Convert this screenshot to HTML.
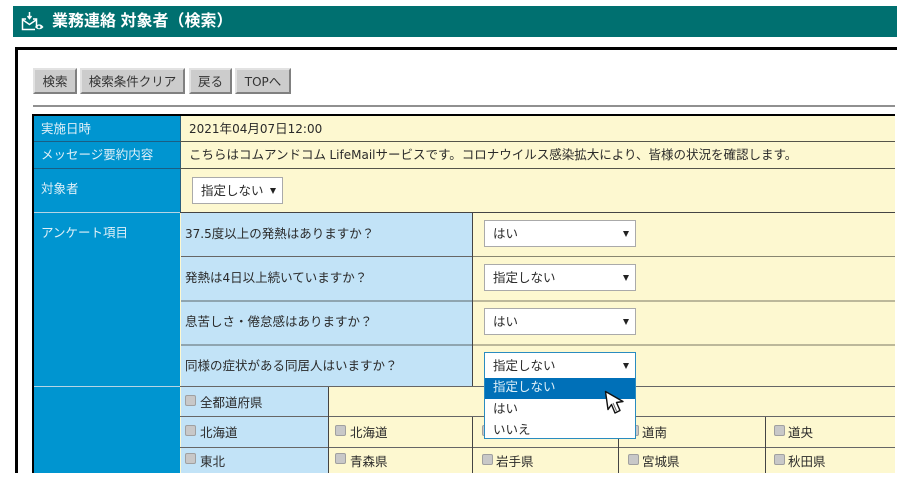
<!DOCTYPE html>
<html lang="ja"><head><meta charset="utf-8">
<style>
html,body{margin:0;padding:0;background:#fff}
#p{position:relative;width:910px;height:478px;overflow:hidden;background:#fff;font-family:"Liberation Sans","Noto Sans CJK JP",sans-serif;font-size:12.5px;color:#2a2a2a}
#p div{position:absolute}
.l{font-family:"DejaVu Sans",sans-serif;font-size:12px}
.t{white-space:nowrap;line-height:16px}
.w{color:#dff0f8}
.btn{top:68px;height:26px;box-sizing:border-box;background:#ccc;border:2px solid;border-color:#e2e2e2 #808080 #808080 #e2e2e2;text-align:center;line-height:24px;white-space:nowrap;color:#333}
.sel{background:#fff;border:1px solid #aaa;box-sizing:border-box;height:27px;line-height:27px;padding-left:8px;white-space:nowrap}
.sel:after{content:"";position:absolute;right:6px;top:10px;border-left:3px solid transparent;border-right:3px solid transparent;border-top:6px solid #222}
.cb{width:11px;height:11px;background:#c8c8c8;border:1px solid #a0a0a0;border-radius:2px;box-sizing:border-box}
</style></head><body><div id="p">
<div style="left:13px;top:6px;width:884px;height:31px;background:#007070"></div>
<svg style="position:absolute;left:20px;top:11px" width="26" height="21" viewBox="0 0 26 21" fill="none" stroke="#fff"><path d="M9.500 1v6M7.500 5l2 2.500 2-2.500" stroke-width="1.500"/><path d="M6 8H2.500v10.500H15M13 8h3.500v7" stroke-width="1.500"/><path d="M3 9l6.500 4.500L16 9" stroke-width="1.500"/><path d="M15 16c2.500-3.500 6-3.500 8.500 0-2.500 3-6 3-8.500 0z" fill="#fff" stroke="none"/><circle cx="19" cy="16" r="1.400" fill="#007070" stroke="none"/></svg>
<div class="t" style="left:52px;top:13px;font-size:16px;font-weight:bold;color:#fff;line-height:18px">業務連絡 対象者（検索）</div>

<div style="left:15px;top:47px;width:882px;height:3px;background:#000"></div>
<div style="left:15px;top:47px;width:3px;height:426px;background:#000"></div>

<div class="btn" style="left:33px;width:44px">検索</div>
<div class="btn" style="left:80px;width:105px">検索条件クリア</div>
<div class="btn" style="left:189px;width:43px">戻る</div>
<div class="btn" style="left:235px;width:56px"><span class="l">TOP</span>へ</div>
<div style="left:33px;top:105px;width:862px;height:2px;background:#909090"></div>

<div style="left:32px;top:114px;width:863px;height:2px;background:#000"></div>
<div style="left:32px;top:114px;width:2px;height:359px;background:#000"></div>
<div style="left:34px;top:116px;width:146px;height:357px;background:#0095d0"></div>
<div style="left:180px;top:116px;width:715px;height:357px;background:#fdf8d0"></div>
<div style="left:180px;top:116px;width:1px;height:96px;background:#2a5f7f"></div>

<div style="left:34px;top:141px;width:146px;height:1px;background:#1a5f85"></div>
<div style="left:180px;top:141px;width:715px;height:1px;background:#55554a"></div>
<div style="left:34px;top:168px;width:146px;height:1px;background:#1a5f85"></div>
<div style="left:180px;top:168px;width:715px;height:1px;background:#55554a"></div>
<div style="left:34px;top:212px;width:146px;height:1px;background:#b5d5e5"></div>
<div style="left:180px;top:212px;width:715px;height:1px;background:#444"></div>
<div style="left:34px;top:386px;width:146px;height:1px;background:#b5d5e5"></div>

<div class="t w" style="left:41px;top:121px">実施日時</div>
<div class="t w" style="left:41px;top:147px">メッセージ要約内容</div>
<div class="t w" style="left:41px;top:181px">対象者</div>
<div class="t w" style="left:41px;top:225px">アンケート項目</div>

<div class="t" style="left:189px;top:121px"><span class="l">2021</span>年<span class="l">04</span>月<span class="l">07</span>日<span class="l">12:00</span></div>
<div class="t" style="left:189px;top:147px">こちらはコムアンドコム <span class="l">LifeMail</span>サービスです。コロナウイルス感染拡大により、皆様の状況を確認します。</div>
<div class="sel" style="left:192px;top:177px;width:91px">指定しない</div>

<div style="left:181px;top:213px;width:291px;height:173px;background:#c2e3f7"></div>
<div style="left:181px;top:387px;width:147px;height:86px;background:#c2e3f7"></div>
<div style="left:472px;top:213px;width:1px;height:173px;background:#444"></div>
<div style="left:181px;top:256px;width:291px;height:1px;background:#666"></div>
<div style="left:473px;top:256px;width:422px;height:1px;background:#888670"></div>
<div style="left:181px;top:300px;width:291px;height:2px;background:#8fa5b0"></div>
<div style="left:473px;top:300px;width:422px;height:2px;background:#bcb89a"></div>
<div style="left:181px;top:344px;width:291px;height:2px;background:#8fa5b0"></div>
<div style="left:473px;top:344px;width:422px;height:2px;background:#bcb89a"></div>
<div style="left:180px;top:386px;width:715px;height:1px;background:#666"></div>
<div style="left:180px;top:416px;width:715px;height:1px;background:#666"></div>
<div style="left:180px;top:447px;width:715px;height:1px;background:#666"></div>
<div style="left:328px;top:387px;width:1px;height:86px;background:#444"></div>
<div style="left:472px;top:417px;width:1px;height:56px;background:#444"></div>
<div style="left:618px;top:417px;width:1px;height:56px;background:#444"></div>
<div style="left:765px;top:417px;width:1px;height:56px;background:#444"></div>

<div class="t" style="left:185px;top:226px"><span class="l">37.5</span>度以上の発熱はありますか？</div>
<div class="t" style="left:185px;top:270px">発熱は<span class="l">4</span>日以上続いていますか？</div>
<div class="t" style="left:185px;top:314px">息苦しさ・倦怠感はありますか？</div>
<div class="t" style="left:185px;top:358px">同様の症状がある同居人はいますか？</div>

<div class="sel" style="left:484px;top:220px;width:152px">はい</div>
<div class="sel" style="left:484px;top:264px;width:152px">指定しない</div>
<div class="sel" style="left:484px;top:308px;width:152px">はい</div>

<div class="cb" style="left:185px;top:395px"></div><div class="t" style="left:200px;top:395px">全都道府県</div>
<div class="cb" style="left:185px;top:425px"></div><div class="t" style="left:200px;top:425px">北海道</div>
<div class="cb" style="left:185px;top:453px"></div><div class="t" style="left:200px;top:454px">東北</div>
<div class="cb" style="left:335px;top:425px"></div><div class="t" style="left:350px;top:425px">北海道</div>
<div class="cb" style="left:335px;top:453px"></div><div class="t" style="left:350px;top:454px">青森県</div>
<div class="cb" style="left:482px;top:425px"></div>
<div class="cb" style="left:482px;top:454px"></div><div class="t" style="left:496px;top:454px">岩手県</div>
<div class="cb" style="left:628px;top:425px"></div><div class="t" style="left:642px;top:425px">道南</div>
<div class="cb" style="left:628px;top:454px"></div><div class="t" style="left:642px;top:454px">宮城県</div>
<div class="cb" style="left:774px;top:425px"></div><div class="t" style="left:788px;top:425px">道央</div>
<div class="cb" style="left:774px;top:454px"></div><div class="t" style="left:788px;top:454px">秋田県</div>

<div style="left:484px;top:352px;width:152px;height:87px;background:#fff;border:1px solid #2a8cc0;box-sizing:border-box"></div>
<div class="t" style="left:493px;top:358px">指定しない</div>
<div style="left:623px;top:363px;width:0;height:0;border-left:3px solid transparent;border-right:3px solid transparent;border-top:6px solid #222"></div>
<div style="left:485px;top:378px;width:150px;height:21px;background:#0070b8"></div>
<div class="t" style="left:493px;top:379px;color:#dff0f8">指定しない</div>
<div class="t" style="left:493px;top:401px">はい</div>
<div class="t" style="left:493px;top:422px">いいえ</div>

<svg style="position:absolute;left:603px;top:389px" width="24" height="26" viewBox="0 0 24 26"><path d="M2.500 2.500L5 20.500l3.500-5 3.500 8.500 5-2.500-3.500-8 6.500-1z" fill="#fff" stroke="#111" stroke-width="1.400" stroke-linejoin="round"/><path d="M10 14l3.500 8" stroke="#666" stroke-width="1" fill="none"/></svg>
</div></body></html>
